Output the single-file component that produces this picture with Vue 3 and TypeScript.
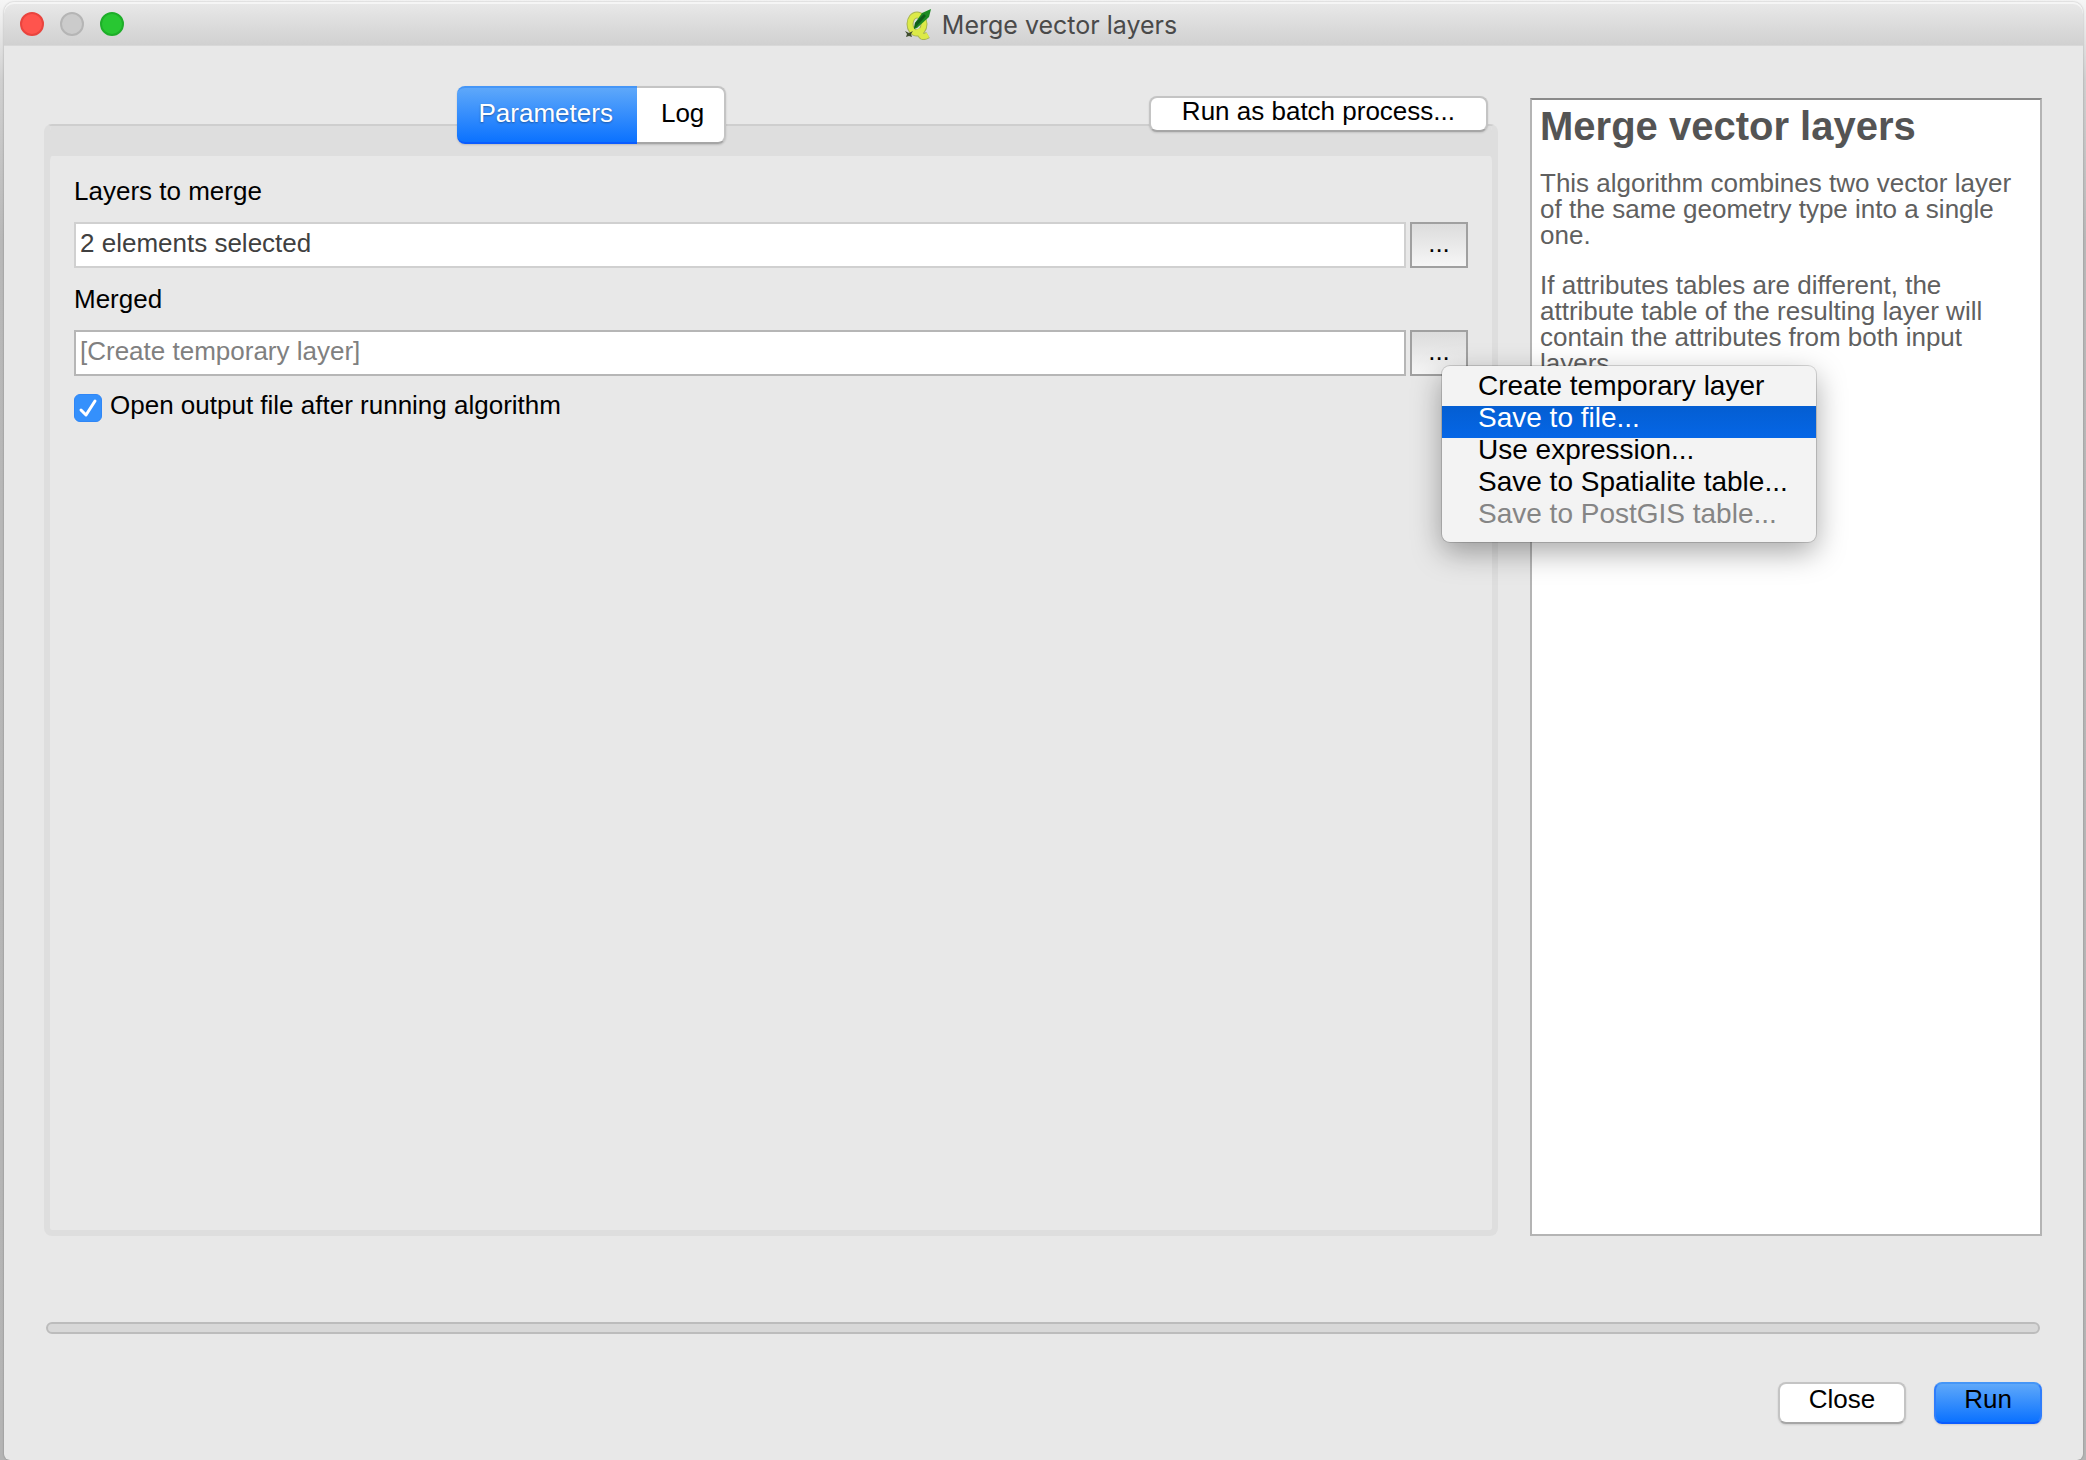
<script setup lang="ts">
import { ref } from 'vue'

interface OutputAction {
  label: string
  disabled?: boolean
}

const tabs: string[] = ['Parameters', 'Log']
const activeTab = ref('Parameters')
const selection = ref('2 elements selected')
const output = ref('')
const openAfterRun = ref(true)
const highlighted = ref('Save to file...')

const outputActions: OutputAction[] = [
  { label: 'Create temporary layer' },
  { label: 'Save to file...' },
  { label: 'Use expression...' },
  { label: 'Save to Spatialite table...' },
  { label: 'Save to PostGIS table...', disabled: true },
]
</script>

<template>
  <div class="desktop">
    <div class="window">
      <header class="titlebar">
        <div class="lights">
          <button type="button" class="light red" aria-label="Close window"></button>
          <button type="button" class="light grey" aria-label="Minimise window"></button>
          <button type="button" class="light green" aria-label="Zoom window"></button>
        </div>
        <div class="title">
          <svg class="logo" viewBox="0 0 28 32" aria-hidden="true">
            <g fill="none" stroke="#a8b552" stroke-width="7">
              <ellipse cx="13" cy="16" rx="7" ry="9" />
              <path d="M14 21 L17 27 Q19 30 24 27" />
            </g>
            <g fill="none" stroke="#dcea48" stroke-width="5">
              <ellipse cx="13" cy="16" rx="7" ry="9" />
              <path d="M14 21 L17 27 Q19 30 24 27" />
            </g>
            <path d="M10 21 L11 15 L18 5 L27 1 L25 9 L13 20 Z" fill="#1b8a22" />
            <path d="M10 21 L11 15 L20 6 L22 8 Z" fill="#0f5c1a" />
            <path d="M1 23 L5 25 L9 23 L7 26 L8 29 L5 28 L2 29 L3 26 Z" fill="#3f4c2e" />
          </svg>
          <h1>Merge vector layers</h1>
        </div>
      </header>

      <main class="content">
        <div class="columns">
          <section class="left">
            <div class="tabrow">
              <div class="tabs-slot">
                <div class="tabs" role="tablist">
                  <button
                    v-for="tab in tabs"
                    :key="tab"
                    type="button"
                    role="tab"
                    class="tab"
                    :class="{ active: tab === activeTab }"
                    :aria-selected="tab === activeTab"
                    @click="activeTab = tab"
                  >{{ tab }}</button>
                </div>
              </div>
              <button type="button" class="push batch">Run as batch process...</button>
            </div>

            <form class="frame" @submit.prevent>
              <label for="layers">Layers to merge</label>
              <div class="row">
                <input id="layers" v-model="selection" class="field quiet" type="text" readonly />
                <button type="button" class="more" aria-label="Select layers">...</button>
              </div>
              <label for="merged">Merged</label>
              <div class="row">
                <input id="merged" v-model="output" class="field" type="text" placeholder="[Create temporary layer]" />
                <div class="anchor">
                  <button type="button" class="more" aria-label="Choose output" aria-haspopup="menu">...</button>
                  <div class="menu" role="menu">
                    <button
                      v-for="action in outputActions"
                      :key="action.label"
                      type="button"
                      role="menuitem"
                      class="item"
                      :class="{ current: action.label === highlighted }"
                      :disabled="action.disabled"
                      @mouseenter="highlighted = action.label"
                    >{{ action.label }}</button>
                  </div>
                </div>
              </div>
              <div class="check">
                <span class="box">
                  <input id="open-output" v-model="openAfterRun" type="checkbox" />
                  <svg v-if="openAfterRun" viewBox="0 0 28 28" aria-hidden="true">
                    <path d="M7 16 L12 21 L21 7" fill="none" stroke="#fff" stroke-width="3" stroke-linecap="round" stroke-linejoin="round" />
                  </svg>
                </span>
                <label for="open-output">Open output file after running algorithm</label>
              </div>
            </form>
          </section>

          <aside class="help">
            <h2>Merge vector layers</h2>
            <p>This algorithm combines two vector layer of the same geometry type into a single one.</p>
            <p>If attributes tables are different, the attribute table of the resulting layer will contain the attributes from both input layers.</p>
          </aside>
        </div>

        <div class="progress" role="progressbar" aria-valuemin="0" aria-valuemax="100" aria-valuenow="0" aria-label="Progress"></div>

        <footer class="actions">
          <button type="button" class="push">Close</button>
          <button type="button" class="push primary">Run</button>
        </footer>
      </main>
    </div>
  </div>
</template>

<style>
body {
  margin: 0;
  background: #f4f4f4;
}
</style>

<style scoped>
.desktop {
  box-sizing: border-box;
  min-height: 100vh;
  padding: 2px 3px 0 4px;
  display: flex;
  background: linear-gradient(#f6f6f6, #d0d0d0 80px, #b8b8b8 240px, #b4b4b4);
  font-family: 'Liberation Sans', Arial, sans-serif;
  font-size: 26px;
  line-height: 26px;
  color: #000;
}

button,
input {
  font: inherit;
  color: inherit;
  margin: 0;
  box-sizing: border-box;
}

.window {
  flex: 1;
  min-width: 0;
  display: flex;
  flex-direction: column;
  border-radius: 10px 10px 6px 6px;
  background: #e8e8e8;
  box-shadow: 0 0 2px rgba(0, 0, 0, 0.3);
}

.titlebar {
  display: grid;
  grid-template-columns: 1fr auto 1fr;
  align-items: center;
  height: 44px;
  border-radius: 10px 10px 0 0;
  background: linear-gradient(#e9e9e9, #d0d0d0);
  box-shadow: inset 0 2px #f5f5f5, inset 0 -1px #d8d8d8;
}

.lights {
  display: flex;
  gap: 16px;
  padding-left: 16px;
}

.light {
  width: 24px;
  height: 24px;
  padding: 0;
  border: 2px solid;
  border-radius: 50%;
}

.red {
  background: #ff544d;
  border-color: #e9443e;
}

.grey {
  background: #cbcbcb;
  border-color: #b5b5b5;
}

.green {
  background: #28c732;
  border-color: #1eae29;
}

.title {
  display: flex;
  align-items: center;
  gap: 10px;
  padding-right: 6px;
}

.logo {
  width: 28px;
  height: 32px;
}

h1 {
  margin: 0;
  padding-top: 2px;
  font: 400 25px/26px Inter, sans-serif;
  color: #4a4a4a;
}

.content {
  flex: 1;
  display: flex;
  flex-direction: column;
  padding: 40px 41px 36px 40px;
}

.columns {
  flex: 1;
  display: grid;
  grid-template-columns: minmax(0, 1fr) 512px;
  gap: 32px;
}

.left {
  display: flex;
  flex-direction: column;
}

.tabrow {
  position: relative;
  z-index: 1;
  display: flex;
  align-items: flex-start;
  gap: 10px;
  padding-right: 10px;
  margin-bottom: -20px;
}

.tabs-slot {
  flex: 1;
  display: flex;
  justify-content: center;
}

.tabs {
  display: flex;
  border-radius: 8px;
  box-shadow: 0 1px 2px rgba(0, 0, 0, 0.15);
}

.tab {
  height: 58px;
  padding: 0 20px 4px 24px;
  border: 2px solid #c4c4c4;
  border-left-width: 0;
  border-bottom-color: #a6a6a6;
  border-radius: 0 8px 8px 0;
  background: #fff;
}

.tab.active {
  padding: 0 24px 4px 22px;
  border-width: 2px 0;
  border-color: #4596f7 transparent #0a5cff;
  border-radius: 8px 0 0 8px;
  background: linear-gradient(#5ea8fa, #0b72ff);
  color: #fff;
  text-shadow: 0 1px 2px rgba(0, 0, 0, 0.35);
}

.push {
  padding: 2px 29px 10px;
  border: 2px solid #c4c4c4;
  border-bottom-color: #a6a6a6;
  border-radius: 8px;
  background: #fff;
  box-shadow: 0 1px 2px rgba(0, 0, 0, 0.12);
}

.push.batch {
  margin-top: 10px;
  padding: 0 31px 6px;
}

.push.primary {
  padding: 2px 28px 10px;
  border-color: #4596f7 #2f7dfb #0a5cff;
  background: linear-gradient(#5ea8fa, #0b72ff);
}

.frame {
  flex: 1;
  display: flex;
  flex-direction: column;
  gap: 18px;
  padding: 52px 24px 22px;
  border: 6px solid #dedede;
  border-top: 2px solid #cecece;
  border-radius: 8px;
  box-shadow: inset 0 30px #dedede;
}

.row {
  display: flex;
  gap: 4px;
}

.field {
  flex: 1;
  min-width: 0;
  height: 46px;
  padding: 0 4px 4px;
  border: 2px solid #b6b6b6;
  border-radius: 0;
  background: #fff;
  color: #404040;
  outline: none;
}

.field.quiet {
  border-color: #d0d0d0;
}

.field::placeholder {
  color: #808080;
  opacity: 1;
}

.more {
  display: block;
  width: 58px;
  height: 46px;
  padding: 0 0 4px;
  border: 2px solid #a0a0a0;
  background: linear-gradient(#dcdcdc, #f6f6f6);
}

.anchor {
  position: relative;
}

.menu {
  position: absolute;
  z-index: 5;
  top: 36px;
  left: 32px;
  width: 374px;
  box-sizing: border-box;
  padding: 8px 0;
  border-radius: 8px;
  background: #f3f3f3;
  box-shadow: 0 0 0 1px rgba(0, 0, 0, 0.15), 0 10px 30px rgba(0, 0, 0, 0.35);
}

.item {
  display: block;
  width: 100%;
  padding: 0 36px 8px;
  border: 0;
  background: none;
  font-size: 28px;
  line-height: 24px;
  text-align: left;
  white-space: nowrap;
}

.item.current {
  background: linear-gradient(#045ed2, #0566e6);
  color: #fff;
}

.item:disabled {
  color: #858585;
}

.check {
  display: flex;
  gap: 8px;
  margin-top: -2px;
}

.box {
  display: grid;
  width: 28px;
  height: 28px;
  margin-top: 2px;
}

.box > * {
  grid-area: 1 / 1;
  width: 28px;
  height: 28px;
}

.box input {
  appearance: none;
  border: 1px solid #2f86f6;
  border-radius: 6px;
  background: #fff;
}

.box input:checked {
  background: #3490fc;
}

.box svg {
  pointer-events: none;
}

.help {
  margin-top: 12px;
  padding: 6px 8px;
  border: 2px solid #b4b4b4;
  border-top-color: #8a8a8a;
  background: #fff;
  color: #606060;
}

h2 {
  margin: 0 0 24px;
  font-size: 40px;
  line-height: 40px;
  color: #545454;
}

p {
  margin: 0 0 24px;
}

.progress {
  box-sizing: border-box;
  height: 12px;
  margin: 86px 2px 48px;
  border: 2px solid #bcbcbc;
  border-radius: 6px;
  background: #d8d8d8;
}

.actions {
  display: flex;
  justify-content: flex-end;
  gap: 28px;
}
</style>
